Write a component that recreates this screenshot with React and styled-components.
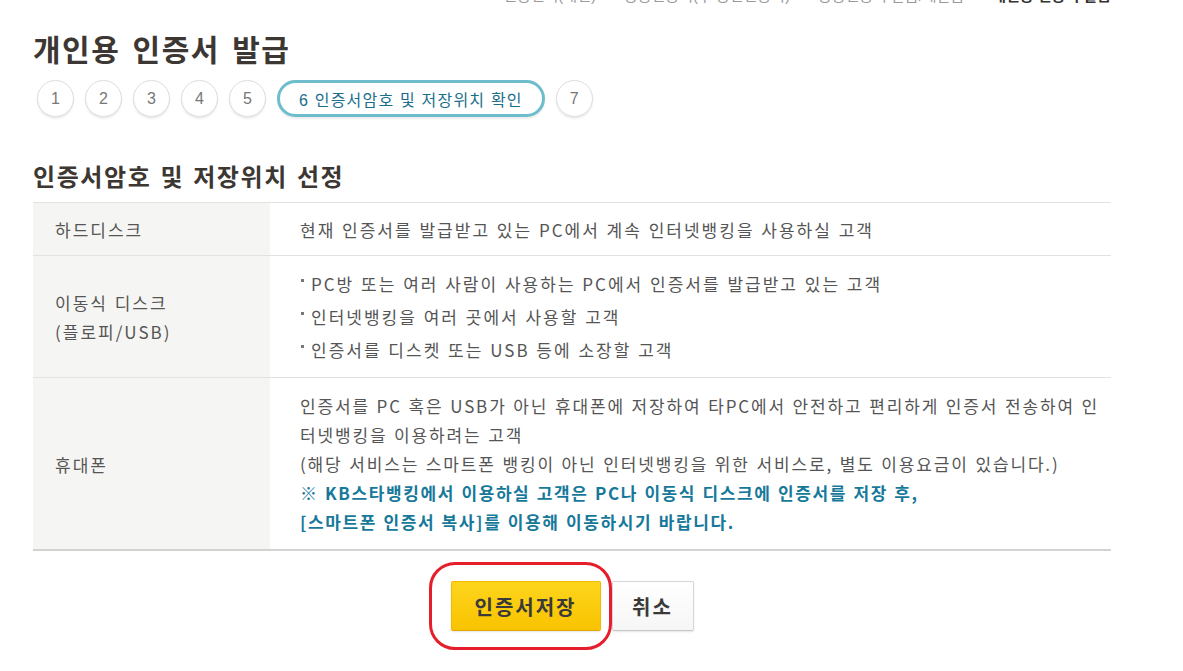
import styled, { createGlobalStyle } from 'styled-components';

const GlobalStyle = createGlobalStyle`
  html, body {
    margin: 0;
    padding: 0;
    background: #fff;
  }
  body {
    font-family: "Noto Sans CJK KR", "Noto Sans", sans-serif;
    color: #555;
  }
  ul {
    margin: 0;
    padding: 0;
    list-style: none;
  }
`

const Page = styled.div`
  width: 1078px;
  padding: 0 0 40px 33px;
`

const Breadcrumb = styled.div`
  display: flex;
  justify-content: flex-end;
  gap: 28px;
  height: 20px;
  margin-top: -14px;
  font-family: "Liberation Sans", "Noto Sans CJK KR", sans-serif;
  font-size: 15px;
  line-height: 20px;
  color: #999;
  span:last-child {
    color: #333;
    font-weight: 700;
  }
`

const Title = styled.h1`
  margin: 22px 0 0;
  font-size: 30px;
  line-height: 40px;
  font-weight: 700;
  letter-spacing: 1.5px;
  word-spacing: 4px;
  color: #3d3733;
`

const Steps = styled.ol`
  display: flex;
  gap: 11px;
  margin: 12px 0 0 4px;
  padding: 0;
  list-style: none;
`

const Step = styled.li`
  display: flex;
  align-items: center;
  justify-content: center;
  box-sizing: border-box;
  height: 37px;
  min-width: 37px;
  padding: ${(props) => (props.$active ? '0 19px' : '0')};
  border-radius: 19px;
  border: ${(props) => (props.$active ? '3px solid #6dbdcd' : '1px solid #ddd')};
  box-shadow: 0 2px 2px rgba(0, 0, 0, 0.08);
  font-family: "Liberation Sans", "Noto Sans CJK KR", sans-serif;
  font-size: 16px;
  letter-spacing: ${(props) => (props.$active ? '1.2px' : '0')};
  color: ${(props) => (props.$active ? '#1b6e8b' : '#777')};
  background: #fff;
`

const SectionTitle = styled.h2`
  margin: 42px 0 0;
  font-size: 24px;
  line-height: 34px;
  font-weight: 700;
  letter-spacing: 1.6px;
  word-spacing: 2px;
  color: #3d3733;
`

const Table = styled.table`
  width: 100%;
  margin-top: 9px;
  border-collapse: collapse;
  border-top: 1px solid #e2e2e2;
  border-bottom: 2px solid #d3d3d3;
  font-size: 17px;
  letter-spacing: 2px;
  word-spacing: 1px;
  line-height: 29px;
`

const Row = styled.tr`
  border-top: 1px solid #e2e2e2;
`

const Head = styled.th`
  width: 237px;
  box-sizing: border-box;
  padding: 12px 22px 11px;
  background: #f5f5f3;
  text-align: left;
  font-weight: 400;
  color: #555;
  vertical-align: middle;
`

const Cell = styled.td`
  padding: ${(props) => props.$pad || '12px'} 1px ${(props) => props.$pad || '11px'} 30px;
  color: #555;
  vertical-align: middle;
`

const Dot = styled.li`
  margin-bottom: 4px;
  &:last-child {
    margin-bottom: 0;
  }
  &::before {
    content: '';
    display: inline-block;
    width: 3px;
    height: 3px;
    margin: 0 7px 0 1px;
    background: #777;
    vertical-align: 9px;
  }
`

const Notice = styled.p`
  margin: 0;
  font-weight: 700;
  color: #17799a;
  letter-spacing: 1.6px;
`

const Plain = styled.p`
  margin: 0;
  letter-spacing: 1.85px;
`

const ButtonRow = styled.div`
  display: flex;
  justify-content: center;
  gap: 11px;
  margin-top: 30px;
`

const Highlight = styled.div`
  position: relative;
  &::after {
    content: '';
    position: absolute;
    left: -22px;
    top: -19px;
    right: -11px;
    bottom: -19px;
    border: 3px solid #e61e2b;
    border-radius: 26px;
    pointer-events: none;
  }
`

const Button = styled.button`
  height: 50px;
  padding: 0 ${(props) => (props.$primary ? '20px' : '16px')};
  min-width: ${(props) => (props.$primary ? '150px' : '82px')};
  border: 1px solid ${(props) => (props.$primary ? '#f2b900' : '#d6d6d6')};
  border-bottom-color: ${(props) => (props.$primary ? '#e3a500' : '#c6c6c6')};
  border-radius: 2px;
  background: ${(props) =>
    props.$primary
      ? 'linear-gradient(#fdd51c, #f9c300)'
      : 'linear-gradient(#ffffff, #f6f6f6)'};
  box-shadow: 0 1px 2px rgba(0, 0, 0, 0.1);
  font-family: "Noto Sans CJK KR", sans-serif;
  font-size: 20px;
  font-weight: 700;
  letter-spacing: 2px;
  color: #3a3a3a;
  cursor: pointer;
`

const steps = ['1', '2', '3', '4', '5', '6 인증서암호 및 저장위치 확인', '7'];

export default function App() {
  return (
    <>
      <GlobalStyle />
      <Page>
        <Breadcrumb>
          <span>인증센터(개인)</span>
          <span>공동인증서(구 공인인증서)</span>
          <span>공동인증서 발급/재발급</span>
          <span>개인용 인증서 발급</span>
        </Breadcrumb>
        <Title>개인용 인증서 발급</Title>
        <Steps>
          {steps.map((item, idx) => {
            return (
              <Step key={item} $active={idx === 5}>{item}</Step>
            )
          })}
        </Steps>

        <SectionTitle>인증서암호 및 저장위치 선정</SectionTitle>
        <Table>
          <tbody>
            <Row>
              <Head>하드디스크</Head>
              <Cell>현재 인증서를 발급받고 있는 PC에서 계속 인터넷뱅킹을 사용하실 고객</Cell>
            </Row>
            <Row>
              <Head>이동식 디스크<br />(플로피/USB)</Head>
              <Cell $pad="13px">
                <ul>
                  <Dot>PC방 또는 여러 사람이 사용하는 PC에서 인증서를 발급받고 있는 고객</Dot>
                  <Dot>인터넷뱅킹을 여러 곳에서 사용할 고객</Dot>
                  <Dot>인증서를 디스켓 또는 USB 등에 소장할 고객</Dot>
                </ul>
              </Cell>
            </Row>
            <Row>
              <Head>휴대폰</Head>
              <Cell $pad="13px">
                <Plain>인증서를 PC 혹은 USB가 아닌 휴대폰에 저장하여 타PC에서 안전하고 편리하게 인증서 전송하여 인터넷뱅킹을 이용하려는 고객</Plain>
                <Plain>(해당 서비스는 스마트폰 뱅킹이 아닌 인터넷뱅킹을 위한 서비스로, 별도 이용요금이 있습니다.)</Plain>
                <Notice>※ KB스타뱅킹에서 이용하실 고객은 PC나 이동식 디스크에 인증서를 저장 후,<br />[스마트폰 인증서 복사]를 이용해 이동하시기 바랍니다.</Notice>
              </Cell>
            </Row>
          </tbody>
        </Table>

        <ButtonRow>
          <Highlight>
            <Button $primary>인증서저장</Button>
          </Highlight>
          <Button>취소</Button>
        </ButtonRow>
      </Page>
    </>
  )
}
